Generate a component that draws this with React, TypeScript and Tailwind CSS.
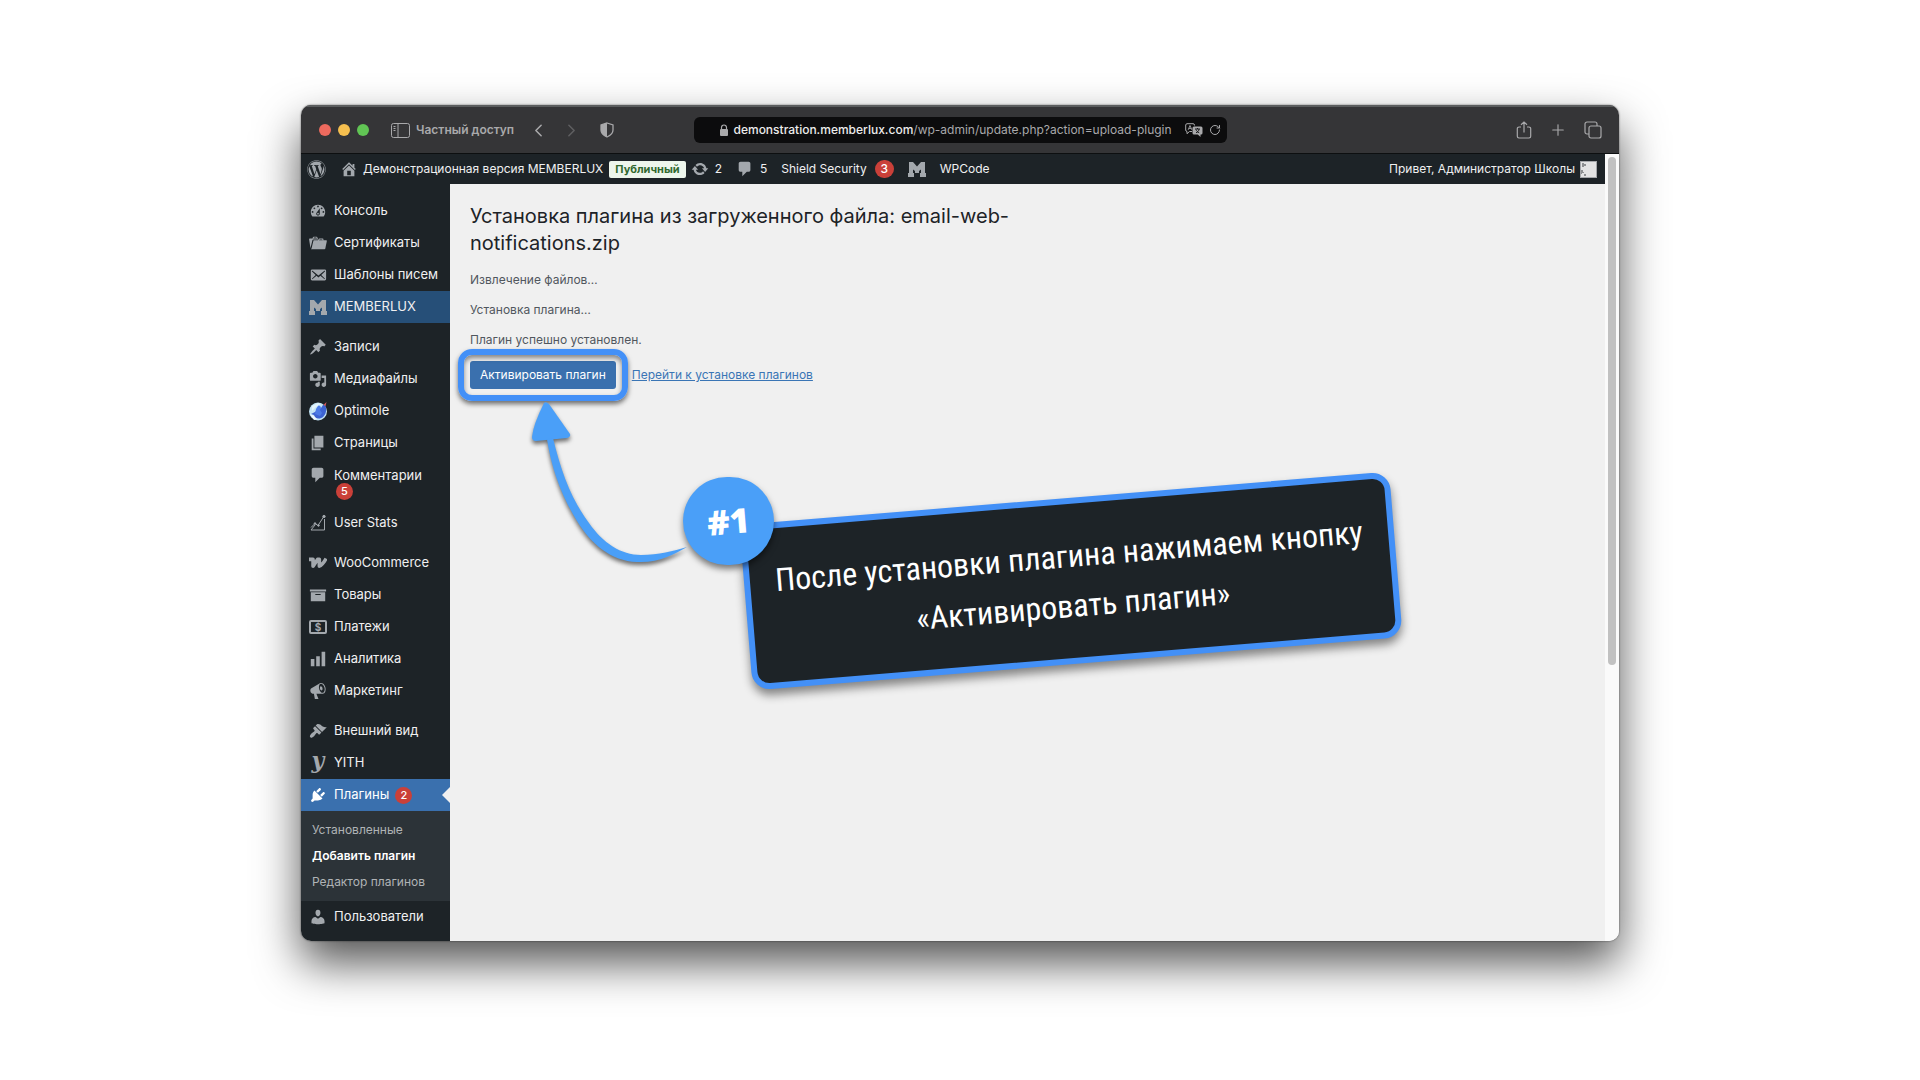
import type { ReactNode } from "react";
import { FaWordpress } from "react-icons/fa";
import { ChevronLeft, ChevronRight, Plus, RotateCw } from "lucide-react";

type MenuItem = {
  label: string;
  icon: ReactNode;
  badge?: number;
  wrapBadge?: boolean;
  state?: "highlight" | "current";
};

const paths = {
  dashboard:
    "M3.76 16h12.48c1.1-1.37 1.76-3.11 1.76-5 0-4.42-3.58-8-8-8s-8 3.58-8 8c0 1.89.66 3.63 1.76 5zM10 4c.55 0 1 .45 1 1s-.45 1-1 1-1-.45-1-1 .45-1 1-1zM6 6c.55 0 1 .45 1 1s-.45 1-1 1-1-.45-1-1 .45-1 1-1zm8 0c.55 0 1 .45 1 1s-.45 1-1 1-1-.45-1-1 .45-1 1-1zm-5.37 5.55L12 7v6c0 1.1-.9 2-2 2s-2-.9-2-2c0-.57.24-1.08.63-1.45zM4 10c.55 0 1 .45 1 1s-.45 1-1 1-1-.45-1-1 .45-1 1-1zm12 0c.55 0 1 .45 1 1s-.45 1-1 1-1-.45-1-1 .45-1 1-1zm-5 3c0-.55-.45-1-1-1s-1 .45-1 1 .45 1 1 1 1-.45 1-1z",
  folder:
    "M4 5H.78c-.37 0-.74.32-.69.84l1.56 9.99S3.5 8.47 3.86 6.7c.11-.53.61-.7.98-.7H10s-.7-2.08-.77-2.31C9.11 3.25 8.89 3 8.45 3H5.14c-.36 0-.7.23-.8.64C4.25 4.04 4 5 4 5zm4.88 0h-4s.42-1 .87-1h2.13c.48 0 1 1 1 1zM2.67 16.25c-.31.47-.76.75-1.26.75h15.73c.54 0 .92-.31 1.03-.83.44-2.19 1.68-8.44 1.68-8.44.07-.5-.3-.73-.62-.73H16V5.53c0-.16-.26-.53-.66-.53h-3.76c-.52 0-.87.58-.87.58L10 7H5.59c-.32 0-.63.19-.69.5 0 0-1.59 6.7-1.72 7.33-.07.37-.22.99-.51 1.42zM15.38 7H11s.58-1 1.13-1h2.29c.71 0 .96 1 .96 1z",
  email:
    "M19 14.5v-9c0-.83-.67-1.5-1.5-1.5H3.49c-.83 0-1.5.67-1.5 1.5v9c0 .83.67 1.5 1.5 1.5H17.5c.83 0 1.5-.67 1.5-1.5zm-1.31-9.11c.33.33.15.67-.03.84L13.6 9.95l3.9 4.06c.12.14.2.36.06.51-.13.16-.43.15-.56.05l-4.37-3.73-2.14 1.95-2.13-1.95-4.37 3.73c-.13.1-.43.11-.56-.05-.14-.15-.06-.37.06-.51l3.9-4.06-4.06-3.72c-.18-.17-.36-.51-.03-.84s.67-.17.95.07l6.24 5.04 6.25-5.04c.28-.24.62-.4.95-.07z",
  post: "M10.44 3.02l1.82-1.82 6.36 6.35-1.83 1.82c-1.05-.68-2.48-.57-3.41.36l-.75.75c-.92.93-1.04 2.35-.35 3.41l-1.83 1.82-2.41-2.41-2.8 2.79c-.42.42-3.38 2.71-3.8 2.29s1.86-3.39 2.28-3.81l2.79-2.79L4.1 9.36l1.83-1.82c1.05.69 2.48.57 3.4-.36l.75-.75c.93-.92 1.05-2.35.36-3.41z",
  media:
    "M13 11V4c0-.55-.45-1-1-1h-1.67L9 1H5L3.67 3H2c-.55 0-1 .45-1 1v7c0 .55.45 1 1 1h10c.55 0 1-.45 1-1zM7 4.5c1.38 0 2.5 1.12 2.5 2.5S8.38 9.5 7 9.5 4.5 8.38 4.5 7 5.62 4.5 7 4.5zM14 6h5v10.5c0 1.38-1.12 2.5-2.5 2.5S14 17.88 14 16.5s1.12-2.5 2.5-2.5c.17 0 .34.02.5.05V9h-3V6zm-4 8.05V13h2v3.5c0 1.38-1.12 2.5-2.5 2.5S7 17.88 7 16.5 8.12 14 9.5 14c.17 0 .34.02.5.05z",
  page: "M6 15V2h10v13H6zm-1 1h8v2H3V5h2v11z",
  comment: "M5 2h9c1.1 0 2 .9 2 2v7c0 1.1-.9 2-2 2h-2l-5 5v-5H5c-1.1 0-2-.9-2-2V4c0-1.1.9-2 2-2z",
  archive: "M19 4v2H1V4h18zM2 7h16v10H2V7zm11 3V9H7v1h6z",
  chart: "M18 18V2h-4v16h4zm-6 0V7H8v11h4zm-6 0v-8H2v8h4z",
  megaphone:
    "M18.15 5.94c.46 1.62.38 3.22-.02 4.48-.42 1.28-1.26 2.18-2.3 2.48-.16.06-.26.06-.4.06-.06.02-.12.02-.18.02-.06.02-.14.02-.22.02h-6.8l2.22 5.5c.02.14-.06.26-.14.34-.08.1-.24.16-.34.16H6.95c-.1 0-.26-.06-.34-.16-.08-.08-.16-.2-.14-.34l-1-5.5H4.25l-.02-.02c-.5.06-1.08-.18-1.54-.62s-.88-1.08-1.06-1.88c-.24-.8-.2-1.56-.02-2.2.18-.62.58-1.08 1.06-1.3l.02-.02 9-5.4c.1-.06.18-.1.24-.16.06-.04.14-.08.24-.12.16-.08.28-.12.5-.18 1.04-.3 2.24.1 3.22.98s1.84 2.24 2.26 3.86zm-2.58 5.98h-.02c.4-.1.74-.34 1.04-.7.58-.7.86-1.76.86-3.04 0-.64-.1-1.3-.28-1.98-.34-1.36-1.02-2.5-1.78-3.24s-1.68-1.1-2.46-.88c-.82.22-1.4.96-1.7 2-.32 1.04-.28 2.36.06 3.72.38 1.36 1 2.5 1.8 3.24.78.74 1.62 1.1 2.48.88zm-2.54-7.08c.22-.04.42-.02.62.04.38.16.76.48 1.02 1s.42 1.2.42 1.78c0 .3-.04.56-.12.8-.18.48-.44.84-.86.94-.34.1-.8-.06-1.14-.4s-.64-.86-.78-1.5c-.18-.62-.12-1.24.02-1.72s.48-.84.82-.94z",
  appearance:
    "M14.48 11.06L7.41 3.99l1.5-1.5c.5-.56 2.3-.47 3.51.32 1.21.8 1.43 1.28 2.91 2.1 1.18.64 2.45 1.26 4.45.85zm-.71.71L6.7 4.7 4.93 6.47c-.39.39-.39 1.02 0 1.41l1.06 1.06c.39.39.39 1.03 0 1.42-.6.6-1.43 1.11-2.21 1.69-.35.26-.7.53-1.01.84C1.43 14.23.4 16.08 1.4 17.07c.99 1 2.84-.03 4.18-1.36.31-.31.58-.66.85-1.02.57-.78 1.08-1.61 1.69-2.21.39-.39 1.02-.39 1.41 0l1.06 1.06c.39.39 1.02.39 1.41 0z",
  plugins:
    "M13.11 4.36L9.87 7.6 8 5.73l3.24-3.24c.35-.34 1.05-.2 1.56.32.52.51.66 1.21.31 1.55zm-8 1.77l.91-1.12 9.01 9.01-1.19.84c-.71.71-2.63 1.16-3.82 1.16H6.14L4.9 17.26c-.59.59-1.54.59-2.12 0-.59-.58-.59-1.53 0-2.12l1.24-1.24v-3.88c0-1.13.4-3.19 1.09-3.89zm7.26 3.97l3.24-3.24c.34-.35 1.04-.21 1.55.31.52.51.66 1.21.31 1.55l-3.24 3.25z",
  users:
    "M10 9.25c-2.27 0-2.73-3.44-2.73-3.44C7 4.02 7.82 2 9.97 2c2.16 0 2.98 2.02 2.71 3.81 0 0-.41 3.44-2.68 3.44zm0 2.57L12.72 10c2.39 0 4.52 2.33 4.52 4.53v2.49s-3.65 1.13-7.24 1.13c-3.65 0-7.24-1.13-7.24-1.13v-2.49c0-2.25 1.94-4.48 4.47-4.48z",
  home: "M16 8.5l1.53 1.53-1.06 1.06L10 4.6l-6.47 6.49-1.06-1.06L10 2.5l4 4v-2h2v4zm-6-2.46l6 5.99V18H4v-5.97zM12 17v-5H8v5h4z",
  update:
    "M10.2 3.28c3.53 0 6.43 2.61 6.92 6h2.08l-3.5 4-3.5-4h2.32c-.45-1.97-2.21-3.45-4.32-3.45-1.45 0-2.73.71-3.54 1.78L4.95 5.66C6.23 4.2 8.11 3.28 10.2 3.28zm-.4 13.44c-3.52 0-6.43-2.61-6.92-6H.8l3.5-4c1.17 1.33 2.33 2.67 3.5 4H5.48c.45 1.97 2.21 3.45 4.32 3.45 1.45 0 2.73-.71 3.54-1.78l1.71 1.95c-1.28 1.46-3.15 2.38-5.25 2.38z",
};

const Dashicon = ({ name }: { name: keyof typeof paths }) => (
  <svg viewBox="0 0 20 20" className="h-[18px] w-[18px] shrink-0" fill="currentColor" fillRule="evenodd">
    <path d={paths[name]} />
  </svg>
);

const MemberluxLogo = () => (
  <svg viewBox="0 0 18 18" className="h-[18px] w-[18px] shrink-0" fill="currentColor">
    <path d="M1 2h4l4 4.500L13 2h4v11h1v4h-6v-4h1V9.500l-2 1.500v2H7v-2L5 9.500V13h1v4H0v-4h1z" />
  </svg>
);

const OptimoleLogo = () => (
  <svg viewBox="0 0 20 20" className="h-5 w-5 shrink-0">
    <circle cx="10" cy="10.500" r="9" fill="#c3e4f5" />
    <path d="M17 4c1.500 3 2 8-1.500 11.500-2.500 2.500-6 2.500-8.500 1l-1-2.500-3-1 4-2 3-3 3-1 2-3z" fill="#3d63d2" />
    <path d="M8 8l2.500-4L13 6l-1 3 2 3-2 3-5-2z" fill="#4d7be6" />
    <path d="M2 13l4 6 3-1-3-3z" fill="#eef8fd" />
    <path d="M15.500 4l3-3-1 4z" fill="#e05a5a" />
    <path d="M4 5l6-3 3 1-5 3-4 4z" fill="#e3f4fc" />
  </svg>
);

const StatsIcon = () => (
  <svg viewBox="0 0 18 18" className="h-[18px] w-[18px] shrink-0" fill="none" stroke="currentColor" strokeWidth="1">
    <path d="M2 13.500l4-4 3 2L14.500 3M2 16h13.500V5M2 16l4-5" />
    <circle cx="15" cy="2.500" r="1.200" fill="currentColor" />
    <circle cx="6" cy="9.500" r=".8" fill="currentColor" />
    <circle cx="9.500" cy="11.500" r=".8" fill="currentColor" />
  </svg>
);

const WooLogo = () => (
  <svg viewBox="0 0 20 20" className="h-[18px] w-[18px] shrink-0" fill="none" stroke="currentColor" strokeWidth="4">
    <path d="M0 6h4.500v7.500L9.500 6h2v7.500c3-1 5-4 7.500-8.500" strokeLinejoin="round" />
  </svg>
);

const PaymentsIcon = () => (
  <span className="flex h-[14px] w-[18px] shrink-0 items-center justify-center rounded-[2px] border-2 border-current text-[10px] leading-none font-bold">
    $
  </span>
);

const YithIcon = () => (
  <span className="flex h-5 w-[18px] shrink-0 items-center justify-center font-['DejaVu_Serif',serif] text-[22px] leading-none font-bold italic">
    <span className="-mt-1.5">y</span>
  </span>
);

const groups: MenuItem[][] = [
  [
    { label: "Консоль", icon: <Dashicon name="dashboard" /> },
    { label: "Сертификаты", icon: <Dashicon name="folder" /> },
    { label: "Шаблоны писем", icon: <Dashicon name="email" /> },
    { label: "MEMBERLUX", icon: <MemberluxLogo />, state: "highlight" },
  ],
  [
    { label: "Записи", icon: <Dashicon name="post" /> },
    { label: "Медиафайлы", icon: <Dashicon name="media" /> },
    { label: "Optimole", icon: <OptimoleLogo /> },
    { label: "Страницы", icon: <Dashicon name="page" /> },
    { label: "Комментарии", icon: <Dashicon name="comment" />, badge: 5, wrapBadge: true },
    { label: "User Stats", icon: <StatsIcon /> },
  ],
  [
    { label: "WooCommerce", icon: <WooLogo /> },
    { label: "Товары", icon: <Dashicon name="archive" /> },
    { label: "Платежи", icon: <PaymentsIcon /> },
    { label: "Аналитика", icon: <Dashicon name="chart" /> },
    { label: "Маркетинг", icon: <Dashicon name="megaphone" /> },
  ],
  [
    { label: "Внешний вид", icon: <Dashicon name="appearance" /> },
    { label: "YITH", icon: <YithIcon /> },
    { label: "Плагины", icon: <Dashicon name="plugins" />, badge: 2, state: "current" },
  ],
];

const submenu = ["Установленные", "Добавить плагин", "Редактор плагинов"];

const Badge = ({ children }: { children: ReactNode }) => (
  <span className="flex h-[17px] w-[17px] items-center justify-center rounded-full bg-[#ca4039] text-[11px] leading-none font-medium text-white">
    {children}
  </span>
);

const itemStyles = {
  normal: "text-[#f0f0f1]",
  highlight: "bg-[#264f78] text-[#f0f0f1]",
  current: "bg-[#3a70ae] text-white",
};

const MenuRow = ({ item }: { item: MenuItem }) => (
  <li>
    <a
      href="#"
      className={`relative flex pl-2 ${item.wrapBadge ? "h-12" : "h-8"} ${itemStyles[item.state ?? "normal"]}`}
    >
      <span className={`flex h-8 w-[18px] items-center justify-center ${item.state === "current" ? "text-white" : "text-[#a3a8ad]"}`}>
        {item.icon}
      </span>
      <span className={`ml-[7px] flex text-[13px] ${item.wrapBadge ? "flex-col" : "items-center gap-1.5"}`}>
        <span className={item.wrapBadge ? "leading-8" : ""}>{item.label}</span>
        {item.badge && (
          <span className={item.wrapBadge ? "-mt-2 ml-0.5" : ""}>
            <Badge>{item.badge}</Badge>
          </span>
        )}
      </span>
      {item.state === "current" && (
        <span className="absolute top-2 right-0 h-0 w-0 border-y-8 border-r-8 border-y-transparent border-r-[#f0f0f0]" />
      )}
    </a>
  </li>
);

const TitleBar = () => (
  <header className="grid h-[49px] grid-cols-[1fr_533px_1fr] items-center border-t-2 border-b border-t-[#5b5d5e] border-b-[#0d0f10] bg-[#353537] text-[#a9a9ab]">
    <div className="flex items-center pl-[18px]">
      <div className="flex gap-[7px]">
        <span className="h-3 w-3 rounded-full bg-[#ed6a5e]" />
        <span className="h-3 w-3 rounded-full bg-[#f5bf4f]" />
        <span className="h-3 w-3 rounded-full bg-[#61c554]" />
      </div>
      <button type="button" className="ml-[22px] flex items-center gap-1.5 text-[12px] font-semibold">
        <svg viewBox="0 0 19 15" className="h-[15px] w-[19px]" fill="none" stroke="currentColor">
          <rect x=".5" y=".5" width="18" height="14" rx="2" />
          <path d="M7 1v13M2.500 3.500h2M2.500 5.500h2M2.500 7.500h2" />
        </svg>
        Частный доступ
      </button>
      <button type="button" aria-label="Назад" className="ml-[14px]">
        <ChevronLeft className="h-[21px] w-[21px]" strokeWidth={1.75} />
      </button>
      <button type="button" aria-label="Вперёд" className="ml-3 text-[#5f5f61]">
        <ChevronRight className="h-[21px] w-[21px]" strokeWidth={1.75} />
      </button>
      <button type="button" aria-label="Конфиденциальность" className="ml-[18px]">
        <svg viewBox="0 0 14 16" className="h-4 w-[14px]">
          <path d="M7 1l6 2v5c0 3.500-2.500 5.500-6 7-3.500-1.500-6-3.500-6-7V3z" fill="none" stroke="currentColor" strokeWidth="1.300" />
          <path d="M7 1v14C3.500 13.500 1 11.500 1 8V3z" fill="currentColor" />
        </svg>
      </button>
    </div>
    <div className="flex h-[26px] items-center rounded-md bg-[#0c0c0d] pr-1.5 pl-[26px] text-[12px]">
      <svg viewBox="0 0 8 12" className="h-3 w-2 shrink-0">
        <rect y="5" width="8" height="7" rx="1" fill="currentColor" />
        <path d="M1.500 5.500V3.500a2.500 2.500 0 0 1 5 0v2" fill="none" stroke="currentColor" strokeWidth="1.200" />
      </svg>
      <p className="ml-1.5 whitespace-nowrap">
        <span className="font-medium text-[#ececec]">demonstration.memberlux.com</span>/wp-admin/update.php?action=upload-plugin
      </p>
      <div className="ml-auto flex items-center gap-1.5">
        <svg viewBox="0 0 18 14" className="h-[14px] w-[18px]">
          <path d="M9.500 2.500V2A1.500 1.500 0 0 0 8 .7H2A1.500 1.500 0 0 0 .7 2v5A1.500 1.500 0 0 0 2 8.500v2.200l2.500-2.200H7" fill="none" stroke="currentColor" />
          <path d="M3.200 6.800L5 2.500l1.800 4.300M3.800 5.400h2.400" fill="none" stroke="currentColor" strokeWidth=".9" />
          <path d="M9 3.500h7a1.500 1.500 0 0 1 1.500 1.500v5a1.500 1.500 0 0 1-1.500 1.500h-.5V14l-2.700-2.500H9A1.500 1.500 0 0 1 7.500 10V5A1.500 1.500 0 0 1 9 3.500z" fill="currentColor" />
          <path d="M10 6h5M12.500 5v1M11 9.800c2-1 3-2 3-3.800M11 6.500c.5 1.500 1.500 2.500 3.200 3.300" fill="none" stroke="#0c0c0d" strokeWidth=".9" />
        </svg>
        <RotateCw className="h-3 w-3" strokeWidth={2} />
      </div>
    </div>
    <div className="flex items-center justify-end gap-[17px] pr-[17px]">
      <svg viewBox="0 0 16 18" className="h-[18px] w-4" fill="none" stroke="currentColor" strokeWidth="1.200">
        <path d="M5 6H3a1.700 1.700 0 0 0-1.700 1.700v7.600A1.700 1.700 0 0 0 3 17h10a1.700 1.700 0 0 0 1.700-1.700V7.700A1.700 1.700 0 0 0 13 6h-2M8 11.500V1M5 3.800L8 1l3 2.800" />
      </svg>
      <Plus className="h-[18px] w-[18px]" strokeWidth={1.5} />
      <svg viewBox="0 0 18 18" className="h-[18px] w-[18px]" fill="none" stroke="currentColor" strokeWidth="1.200">
        <rect x="5" y="5" width="12" height="12" rx="2" />
        <path d="M5 13H3a2 2 0 0 1-2-2V3a2 2 0 0 1 2-2h8a2 2 0 0 1 2 2v2" />
      </svg>
    </div>
  </header>
);

const AdminBar = () => (
  <nav className="flex h-[30px] items-center bg-[#1d2327] pr-2 pl-1.5 text-[12px] whitespace-nowrap text-[#f0f0f1]">
    <FaWordpress className="h-[19px] w-[19px] text-[#a3a8ad]" />
    <a href="#" className="ml-[14px] flex items-center gap-[5px]">
      <span className="text-[#a3a8ad]">
        <Dashicon name="home" />
      </span>
      Демонстрационная версия MEMBERLUX
    </a>
    <a href="#" className="ml-1.5 rounded-[2px] bg-[#edf6ec] px-1.5 text-[11px] leading-[17px] font-bold text-[#31692f]">
      Публичный
    </a>
    <a href="#" className="ml-[5px] flex items-center gap-1.5">
      <span className="text-[#a3a8ad]">
        <Dashicon name="update" />
      </span>
      2
    </a>
    <a href="#" className="ml-[14px] flex items-center gap-1.5">
      <span className="text-[#a3a8ad]">
        <Dashicon name="comment" />
      </span>
      5
    </a>
    <a href="#" className="ml-[14px] flex items-center gap-2">
      Shield Security
      <span className="flex h-[18px] w-[19px] items-center justify-center rounded-full bg-[#ca4039] font-medium text-white">3</span>
    </a>
    <a href="#" className="ml-[14px] flex items-center gap-[14px]">
      <span className="text-[#a3a8ad]">
        <MemberluxLogo />
      </span>
      WPCode
    </a>
    <a href="#" className="ml-auto flex items-center gap-[5px]">
      Привет, Администратор Школы
      <svg viewBox="0 0 17 17" className="h-[17px] w-[17px]">
        <rect width="17" height="17" fill="#a5a7aa" />
        <rect x="1" y="1" width="15" height="15" fill="#e3e3e3" />
        <path d="M2 2h2v1h2v2H4v1H2zM1 9h2v2h1v1H2v1H1zM4 13h2v2H4z" fill="#8d8f91" />
      </svg>
    </a>
  </nav>
);

const Sidebar = () => (
  <aside className="w-[149px] shrink-0 bg-[#1d2327] pt-[11px] pb-2">
    <nav className="flex flex-col gap-2">
      {groups.map((group, i) => (
        <ul key={i}>
          {group.map((item) => (
            <MenuRow key={item.label} item={item} />
          ))}
        </ul>
      ))}
    </nav>
    <ul className="bg-[#2c3338] py-1.5 pl-[11px] text-[12px]">
      {submenu.map((label) => (
        <li key={label}>
          <a
            href="#"
            className={`block leading-[26px] whitespace-nowrap ${label === "Добавить плагин" ? "font-semibold text-white" : "text-[#b0b3b6]"}`}
          >
            {label}
          </a>
        </li>
      ))}
    </ul>
    <ul>
      <MenuRow item={{ label: "Пользователи", icon: <Dashicon name="users" /> }} />
    </ul>
  </aside>
);

// hand-drawn arrow and note that lie over the page
const Callout = () => (
  <div className="pointer-events-none absolute top-0 left-0">
    <svg
      viewBox="0 0 160 180"
      className="absolute top-[217px] left-[79px] h-[180px] w-[160px] drop-shadow-[0_3px_2px_rgba(0,0,0,0.55)]"
      fill="#4a9ff8"
    >
      <path d="M15 2Q17 0 20 3L41 33Q42 36 38 37L7 40Q3 40 3 36Q4 24 15 2Z" />
      <path d="M18 38L24 37C32 70 42 98 60 122C74 142 92 154 112 154C130 154 144 150 158 146C144 154 130 162 108 161C82 160 62 143 48 120C32 94 22 66 18 38Z" />
    </svg>
    <div className="absolute top-[314px] left-[295px] flex h-[166px] w-[652px] rotate-[-4.7deg] items-center justify-center rounded-[18px] border-6 border-[#4390f7] bg-[#1d2327] shadow-[0_6px_10px_rgba(0,0,0,0.45)]">
      <p className="text-center font-['Roboto_Condensed','Liberation_Sans_Narrow','Open_Sans',sans-serif] text-[32px] leading-[50px] whitespace-nowrap text-white">
        После установки плагина нажимаем кнопку
        <br />
        «Активировать плагин»
      </p>
    </div>
    <div className="absolute top-[293px] left-[233px] flex h-[88px] w-[91px] items-center justify-center rounded-full bg-[#4a9ff8] shadow-[0_4px_6px_rgba(0,0,0,0.5)]">
      <span className="rotate-[-4.7deg] font-['Open_Sans',sans-serif] text-[34px] leading-none font-extrabold text-white">#1</span>
    </div>
  </div>
);

const Content = () => (
  <main className="relative min-w-0 flex-1 bg-[#f0f0f0] pt-[19px] pl-5 text-[12px] text-[#50575e]">
    <h1 className="max-w-[560px] text-[20px] leading-[27px] text-[#1d2327]">
      Установка плагина из загруженного файла: email-web-notifications.zip
    </h1>
    <div className="mt-2 leading-[30px]">
      <p>Извлечение файлов…</p>
      <p>Установка плагина…</p>
      <p>Плагин успешно установлен.</p>
    </div>
    <div className="mt-1.5 flex items-center gap-4">
      <div className="relative">
        <button type="button" className="flex h-7 items-center rounded-[3px] bg-[#3a70ae] px-2.5 text-[12px] text-white">
          Активировать плагин
        </button>
        <span className="absolute -inset-3 rounded-[14px] border-6 border-[#4390f7] shadow-[0_3px_5px_rgba(0,0,0,0.55),inset_0_3px_5px_rgba(0,0,0,0.45)]" />
      </div>
      <a href="#" className="text-[#3a75b5] underline">
        Перейти к установке плагинов
      </a>
    </div>
    <Callout />
  </main>
);

const App = () => (
  <div className="min-h-screen bg-white px-[301px] py-[105px] font-['Inter','Noto_Sans',sans-serif]">
    <div className="relative overflow-hidden rounded-[10px] shadow-[0_22px_45px_rgba(0,0,0,0.67),0_0_2px_rgba(0,0,0,0.6)]">
      <TitleBar />
      <div className="flex">
        <div className="min-w-0 flex-1">
          <AdminBar />
          <div className="flex">
            <Sidebar />
            <Content />
          </div>
        </div>
        <div className="w-[14px] shrink-0 bg-[#fafafa] px-[3px] pt-[3px]">
          <div className="h-[508px] rounded-full bg-[#c1c1c1]" />
        </div>
      </div>
    </div>
  </div>
);

export default App;
